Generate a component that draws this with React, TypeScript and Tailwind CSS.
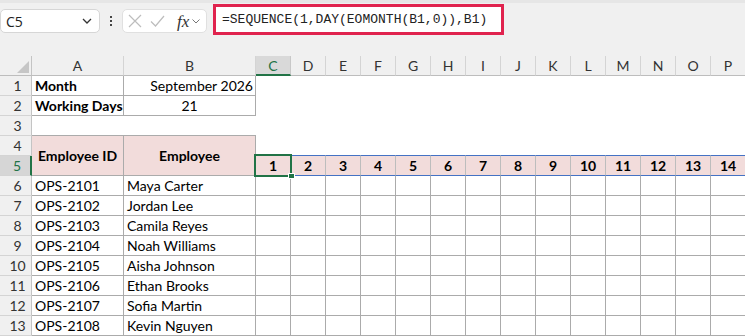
import React from 'react';

const cols = ['C', 'D', 'E', 'F', 'G', 'H', 'I', 'J', 'K', 'L', 'M', 'N', 'O', 'P'];

const employees = [
  ['OPS-2101', 'Maya Carter'],
  ['OPS-2102', 'Jordan Lee'],
  ['OPS-2103', 'Camila Reyes'],
  ['OPS-2104', 'Noah Williams'],
  ['OPS-2105', 'Aisha Johnson'],
  ['OPS-2106', 'Ethan Brooks'],
  ['OPS-2107', 'Sofia Martin'],
  ['OPS-2108', 'Kevin Nguyen'],
];

const cellFont = { fontFamily: 'Lato, "Liberation Sans", sans-serif' };

function RowHeader({ n, active = false }: { n: number; active?: boolean }) {
  return (
    <div
      className={`flex items-center justify-center pl-[4px] text-[14px] border-b border-b-[#d4d4d4] ${
        active
          ? 'bg-[#d6d6d6] text-[#217346] border-r-2 border-r-[#217346]'
          : 'bg-[#f0f0f0] text-[#333] border-r border-r-[#c4c4c4]'
      }`}
    >
      {n}
    </div>
  );
}

function Cell({
  children,
  className = '',
}: {
  children?: React.ReactNode;
  className?: string;
}) {
  return (
    <div className={`flex items-center whitespace-nowrap text-[14px] text-black ${className}`}>
      {children}
    </div>
  );
}

function NameBox() {
  return (
    <div className="mt-[6px] w-[100px] h-[24px] bg-white border border-[#d6d6d6] rounded-[5px] flex items-center justify-between pl-[5px] pr-[7px]">
      <span className="text-[14px] text-[#222]" style={{ fontFamily: '"Open Sans", "Noto Sans", sans-serif' }}>
        C5
      </span>
      <svg width="10" height="6" viewBox="0 0 10 6" fill="none">
        <path d="M1 1l4 4 4-4" stroke="#333" strokeWidth="1.3" />
      </svg>
    </div>
  );
}

function FunctionBox() {
  return (
    <div className="mt-[6px] w-[85px] h-[24px] bg-white border border-[#e0e0e0] rounded-[5px] flex items-center pl-[5px] gap-[8px]">
      <svg width="14" height="14" viewBox="0 0 14 14" fill="none">
        <path d="M1 1l12 12M13 1L1 13" stroke="#bdbdbd" strokeWidth="1.2" />
      </svg>
      <svg width="15" height="12" viewBox="0 0 15 12" fill="none">
        <path d="M1 6.5l4.5 4.5L14 1" stroke="#bdbdbd" strokeWidth="1.2" />
      </svg>
      <div className="flex items-center gap-[3px] ml-[4px]">
        <span
          className="italic text-[17px] leading-none text-[#333]"
          style={{ fontFamily: '"Liberation Serif", serif' }}
        >
          fx
        </span>
        <svg width="8" height="5" viewBox="0 0 8 5" fill="none">
          <path d="M0.5 0.5l3.5 3.5 3.5-3.5" stroke="#777" strokeWidth="1" />
        </svg>
      </div>
    </div>
  );
}

export default function App() {
  return (
    <div className="w-[745px] h-[336px] overflow-hidden bg-[#f0f0f0]" style={cellFont}>
      {/* Formula bar */}
      <div className="h-[3px] bg-[#e6e6e6]" />
      <div className="h-[53px] flex items-start">
        <NameBox />
        <div className="w-[22px] h-[24px] mt-[6px] flex flex-col items-center justify-center gap-[2px]">
          <span className="w-[2px] h-[2px] bg-[#444]" />
          <span className="w-[2px] h-[2px] bg-[#444]" />
          <span className="w-[2px] h-[2px] bg-[#444]" />
        </div>
        <FunctionBox />
        <div className="ml-[6px] mt-[1px] w-[291px] h-[31px] border-[3px] border-[#e0234e] bg-white flex items-center pl-[6px]">
          <span className="text-[13px] text-[#222]" style={{ fontFamily: '"Liberation Mono", monospace' }}>
            =SEQUENCE(1,DAY(EOMONTH(B1,0)),B1)
          </span>
        </div>
      </div>

      {/* Sheet grid */}
      <div className="grid grid-cols-[32px_92px_132px_repeat(14,35px)] auto-rows-[20px] bg-white">
        {/* column headers */}
        <div className="bg-[#f0f0f0] border-r border-r-[#c4c4c4] border-b border-b-[#bdbdbd] flex items-end justify-end pr-[2px] pb-[2px]">
          <svg width="12" height="12" viewBox="0 0 12 12">
            <path d="M12 0V12H0Z" fill="#c6c6c6" />
          </svg>
        </div>
        <div className="bg-[#f0f0f0] border-r border-r-[#d4d4d4] border-b border-b-[#bdbdbd] flex items-center justify-center text-[14px] text-[#333]">
          A
        </div>
        <div className="bg-[#f0f0f0] border-r border-r-[#d4d4d4] border-b border-b-[#bdbdbd] flex items-center justify-center text-[14px] text-[#333]">
          B
        </div>
        {cols.map((c) =>
          c === 'C' ? (
            <div
              key={c}
              className="bg-[#d9d9d9] border-r border-r-[#c8c8c8] border-b-2 border-b-[#217346] flex items-center justify-center text-[14px] text-[#217346]"
            >
              {c}
            </div>
          ) : (
            <div
              key={c}
              className="bg-[#f0f0f0] border-r border-r-[#d4d4d4] border-b border-b-[#bdbdbd] flex items-center justify-center text-[14px] text-[#333]"
            >
              {c}
            </div>
          )
        )}

        {/* row 1 */}
        <RowHeader n={1} />
        <Cell className="border-r border-b border-[#ababab] pl-[3px] font-bold">Month</Cell>
        <Cell className="border-r border-b border-[#ababab] justify-end pr-[2px]">September 2026</Cell>
        {cols.map((c) => (
          <div key={c} />
        ))}

        {/* row 2 */}
        <RowHeader n={2} />
        <Cell className="border-r border-b border-[#ababab] pl-[3px] font-bold">Working Days</Cell>
        <Cell className="border-r border-b border-[#ababab] justify-center">21</Cell>
        {cols.map((c) => (
          <div key={c} />
        ))}

        {/* row 3 */}
        <RowHeader n={3} />
        <Cell className="border-b border-[#ababab]" />
        <Cell className="border-b border-[#ababab]" />
        {cols.map((c) => (
          <div key={c} />
        ))}

        {/* rows 4-5 */}
        <RowHeader n={4} />
        <Cell className="row-span-2 bg-[#f2dcdb] border-r border-b border-[#ababab] justify-center font-bold">
          Employee ID
        </Cell>
        <Cell className="row-span-2 bg-[#f2dcdb] border-r border-b border-[#ababab] justify-center font-bold">
          Employee
        </Cell>
        {cols.map((c) => (
          <div key={c} className="border-b border-b-[#eeeeee]" />
        ))}
        <RowHeader n={5} active />
        {cols.map((c, i) => (
          <Cell
            key={c}
            className={`relative bg-[#f2dcdb] border-r border-r-[#bdbdbd] border-b border-b-[#4472c4] border-t border-t-[#4472c4] -mt-px h-[21px] justify-center font-bold ${
              i === 0 ? 'z-10' : ''
            }`}
          >
            {i + 1}
            {i === 0 && (
              <>
                <span className="absolute left-[-2px] top-[-2px] w-[38px] h-[23px] border-2 border-[#217346]" />
                <span className="absolute left-[32px] top-[17px] w-[7px] h-[6px] bg-[#217346] border border-white" />
              </>
            )}
          </Cell>
        ))}

        {/* employee rows */}
        {employees.map(([id, name], r) => (
          <React.Fragment key={id}>
            <RowHeader n={r + 6} />
            <Cell className="border-r border-b border-[#ababab] pl-[3px]">{id}</Cell>
            <Cell className="border-r border-b border-[#ababab] pl-[3px]">{name}</Cell>
            {cols.map((c) => (
              <div key={c} className="border-r border-b border-[#ababab]" />
            ))}
          </React.Fragment>
        ))}
      </div>
    </div>
  );
}
